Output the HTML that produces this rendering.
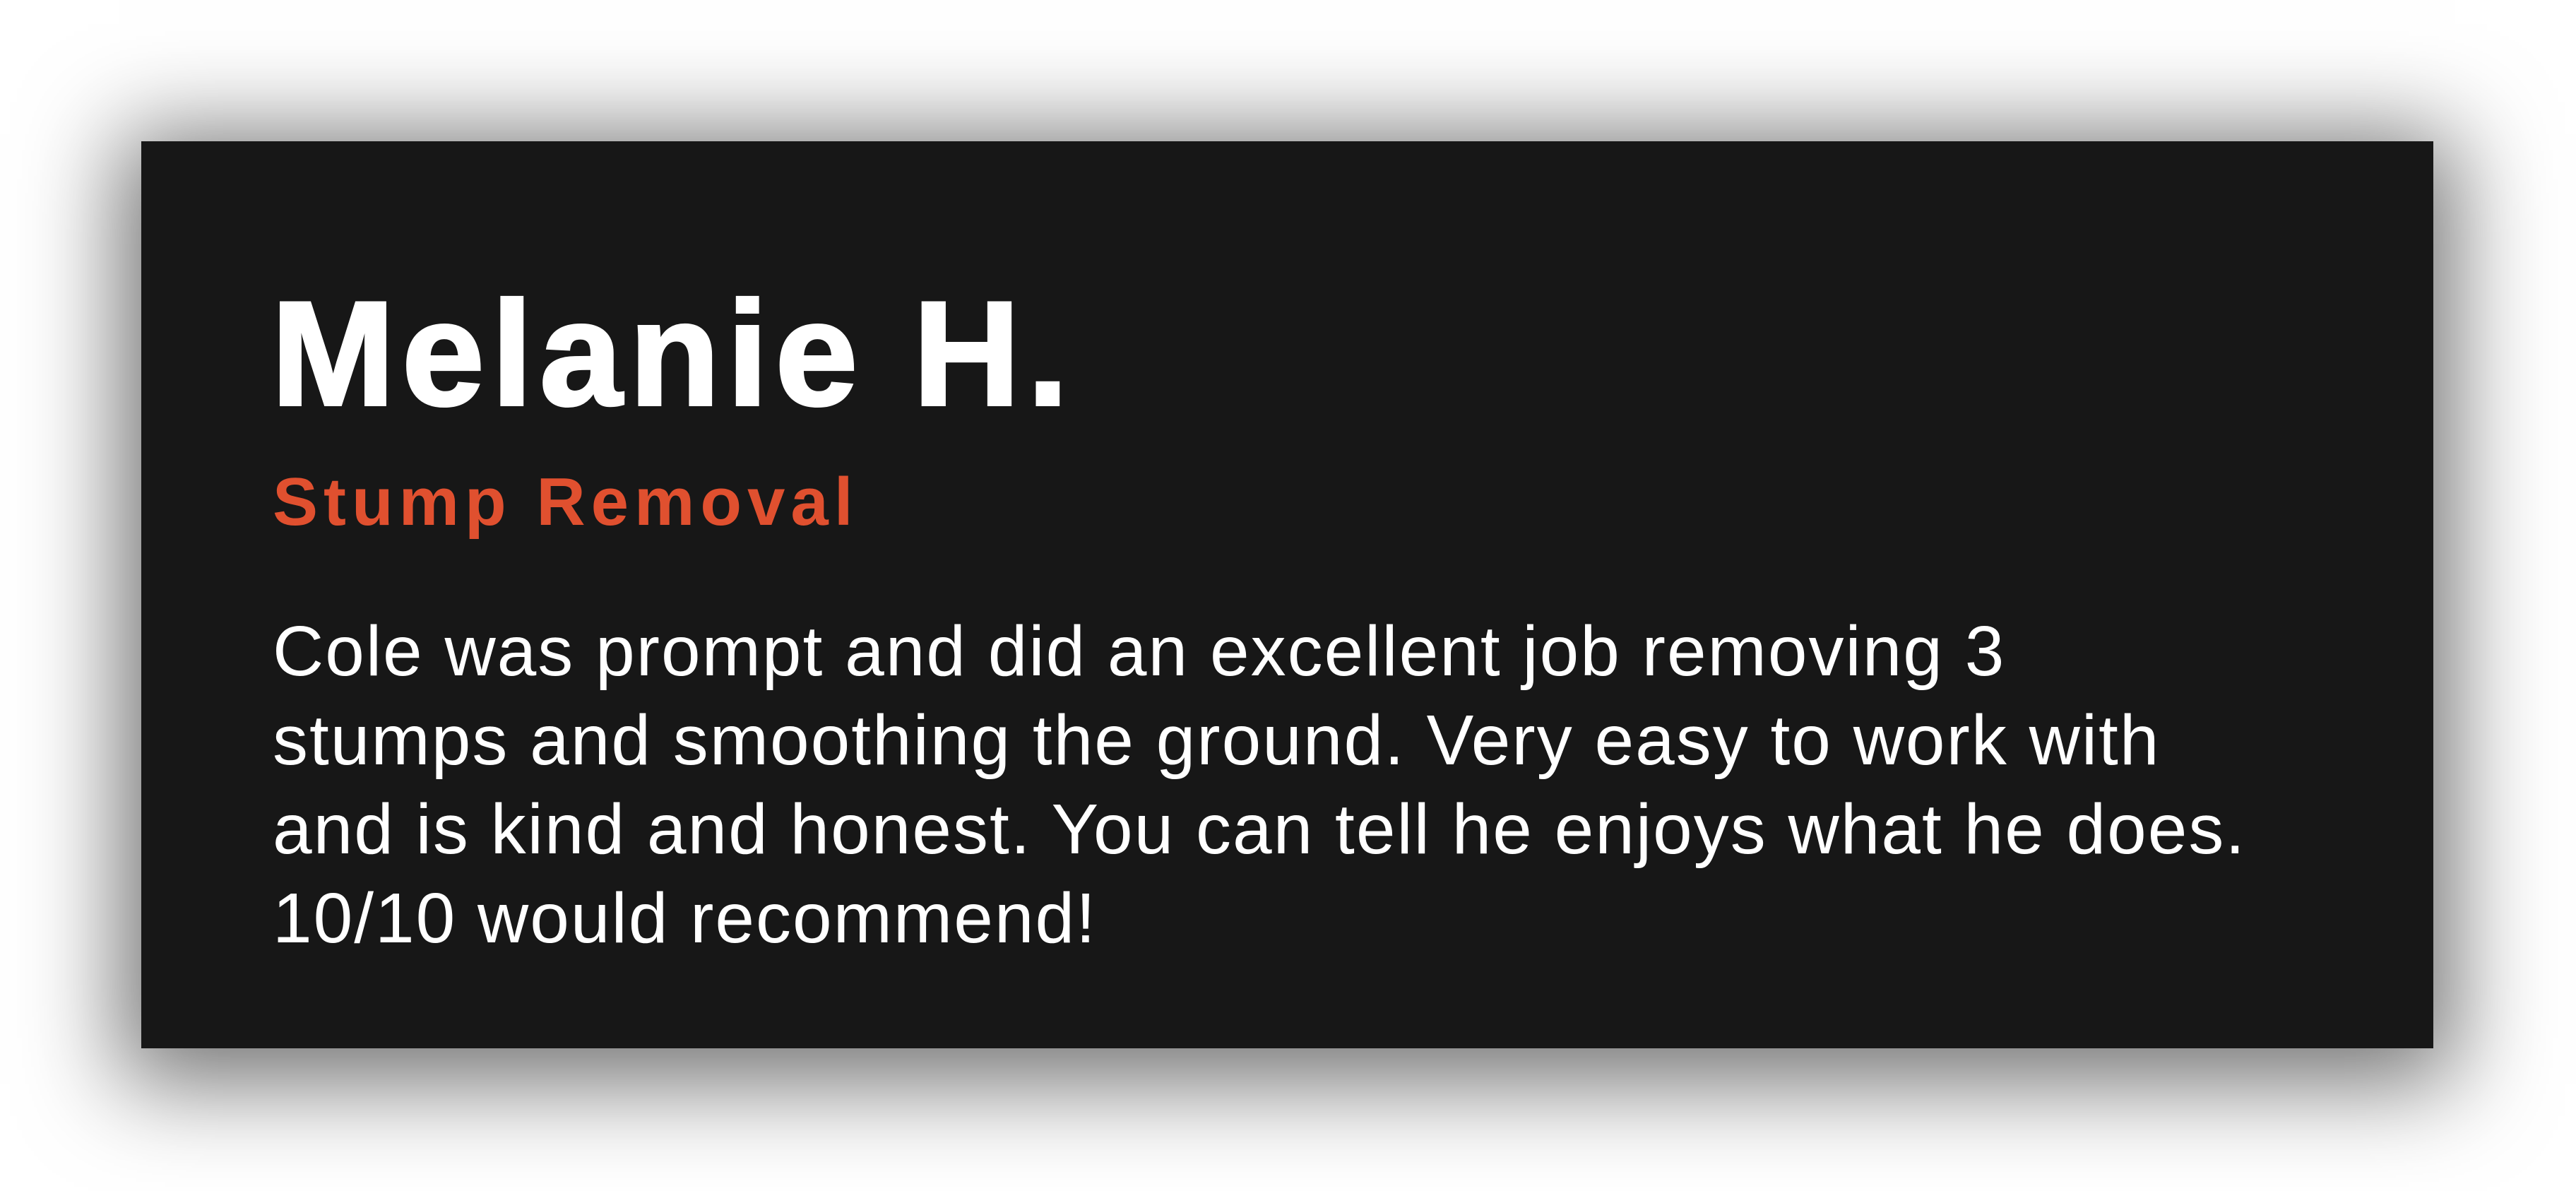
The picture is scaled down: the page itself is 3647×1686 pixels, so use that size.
<!DOCTYPE html>
<html><head><meta charset="utf-8"><style>
html,body{margin:0;padding:0;background:#fff;width:3647px;height:1686px;overflow:hidden;}
.card{position:absolute;left:200px;top:200px;width:3245px;height:1284px;background:#171717;box-shadow:0 20px 140px 30px rgba(0,0,0,0.55);}
.t{position:absolute;left:384px;top:396px;font:bold 210px/210px "Liberation Sans",sans-serif;color:#fff;letter-spacing:10px;margin:0;white-space:nowrap;-webkit-text-stroke:4px #fff;}
.s{position:absolute;left:386px;top:663px;font:bold 96px/96px "Liberation Sans",sans-serif;color:#e0502f;letter-spacing:8px;white-space:nowrap;}
.b{position:absolute;left:386px;top:859px;font:100px/126px "Liberation Sans",sans-serif;color:#fff;letter-spacing:2px;white-space:nowrap;}
</style></head><body>
<div class="card"></div>
<div class="t">Melanie H.</div>
<div class="s">Stump Removal</div>
<div class="b">Cole was prompt and did an excellent job removing 3<br>stumps and smoothing the ground. Very easy to work with<br>and is kind and honest. You can tell he enjoys what he does.<br>10/10 would recommend!</div>
</body></html>
